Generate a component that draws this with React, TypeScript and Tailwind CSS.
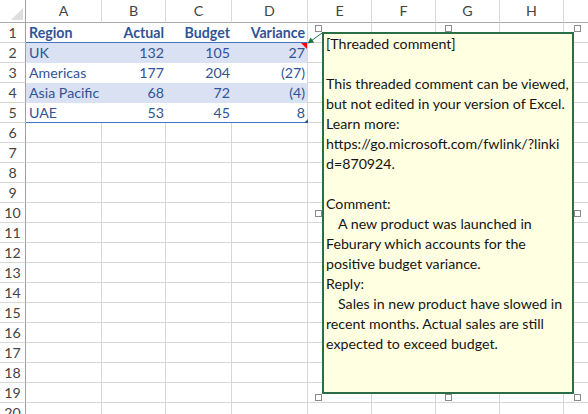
import React from 'react';

const COLS = ['A', 'B', 'C', 'D', 'E', 'F', 'G', 'H', ''];

const TABLE: string[][] = [
  ['Region', 'Actual', 'Budget', 'Variance'],
  ['UK', '132', '105', '27'],
  ['Americas', '177', '204', '(27)'],
  ['Asia Pacific', '68', '72', '(4)'],
  ['UAE', '53', '45', '8'],
];

const LINES: { t: string; indent?: boolean }[] = [
  { t: '[Threaded comment]' },
  { t: '' },
  { t: 'This threaded comment can be viewed,' },
  { t: 'but not edited in your version of Excel.' },
  { t: 'Learn more:' },
  { t: 'https://go.microsoft.com/fwlink/?linki' },
  { t: 'd=870924.' },
  { t: '' },
  { t: 'Comment:' },
  { t: 'A new product was launched in', indent: true },
  { t: 'Feburary which accounts for the' },
  { t: 'positive budget variance.' },
  { t: 'Reply:' },
  { t: 'Sales in new product have slowed in', indent: true },
  { t: 'recent months. Actual sales are still' },
  { t: 'expected to exceed budget.' },
];

function Cell({ r, c }: { r: number; c: number }) {
  if (r === 0 && c === 0) {
    return (
      <div className="flex items-end justify-end border-r border-b border-r-[#9f9f9f] border-b-[#ababab] bg-white pr-[2px] pb-[2px]">
        <svg width="12" height="12" viewBox="0 0 12 12">
          <polygon points="12,0 12,12 0,12" fill="#dedede" />
        </svg>
      </div>
    );
  }
  if (r === 0) {
    return (
      <div className="flex items-center justify-center border-r border-b border-r-[#dadada] border-b-[#ababab] bg-white pt-[1px] text-[#444444]">
        {COLS[c - 1]}
      </div>
    );
  }
  if (c === 0) {
    return (
      <div className="flex items-center justify-center border-r border-b border-r-[#9f9f9f] border-b-[#d6d6d6] bg-white pt-[1px] text-[#444444]">
        {r}
      </div>
    );
  }
  const inTable = r <= 5 && c <= 4;
  if (!inTable) {
    return <div className="border-r border-b border-[#d6d6d6] bg-white" />;
  }
  const value = TABLE[r - 1][c - 1];
  const band = r === 2 || r === 4;
  const rightBorder = c === 4;
  const blueBottom = r === 1 || r === 5;
  let cls = 'relative flex items-center whitespace-nowrap pt-[1px] text-[#305496] ';
  cls += band ? 'bg-[#d9e1f2] ' : 'bg-white ';
  cls += rightBorder ? 'border-r border-r-[#d6d6d6] ' : '';
  cls += blueBottom ? 'border-b border-b-[#4472c4] ' : '';
  cls += r === 1 ? 'font-bold ' : '';
  cls += c === 1 ? 'justify-start pl-[3px]' : 'justify-end pr-[2px]';
  return (
    <div className={cls}>
      {value}
      {r === 2 && c === 4 && (
        <svg className="absolute right-0 top-0" width="6" height="6" viewBox="0 0 6 6">
          <polygon points="0,0 6,0 6,6" fill="#ff0000" />
        </svg>
      )}
      {r === 5 && c === 4 && (
        <svg className="absolute right-[-1px] bottom-[-1px]" width="4" height="4" viewBox="0 0 4 4">
          <polygon points="4,0 4,4 0,4" fill="#2f5597" />
        </svg>
      )}
    </div>
  );
}

function Handle() {
  return <div className="h-[7px] w-[7px] border border-[#8a8a8a] bg-white" />;
}

export default function App() {
  const cells: React.ReactNode[] = [];
  for (let r = 0; r <= 20; r++) {
    for (let c = 0; c <= 9; c++) {
      cells.push(<Cell key={`${r}-${c}`} r={r} c={c} />);
    }
  }
  return (
    <div className="relative h-[414px] w-[588px] overflow-hidden bg-white font-['Lato',sans-serif] text-[14.2px] leading-none">
      <div className="grid grid-cols-[26px_76px_64px_66px_76px_64px_64px_64px_64px_64px] grid-rows-[23px_repeat(20,20px)]">
        {cells}
      </div>

      {/* connector arrow from comment to cell D2 */}
      <svg className="pointer-events-none absolute left-0 top-0" width="588" height="414" viewBox="0 0 588 414">
        <line x1="322" y1="33" x2="311" y2="41" stroke="#217346" strokeWidth="1" />
        <polygon points="307.5,43.5 314.1,42.4 310.6,37.6" fill="#217346" />
      </svg>

      {/* selected comment shape with its sizing handles */}
      <div className="absolute left-[315px] top-[25px] grid grid-cols-[7px_252px_7px] grid-rows-[7px_362px_7px]">
        <Handle />
        <div className="flex justify-center">
          <Handle />
        </div>
        <Handle />

        <div className="flex items-center">
          <Handle />
        </div>
        <div className="border-2 border-[#2a6e48] bg-[#ffffe1] pl-[2px] text-[#151515]">
          {LINES.map((l, i) => (
            <div key={i} className={'flex h-[20px] items-center whitespace-nowrap ' + (l.indent ? 'pl-[12px]' : '')}>
              {l.t}
            </div>
          ))}
        </div>
        <div className="flex items-center">
          <Handle />
        </div>

        <Handle />
        <div className="flex justify-center">
          <Handle />
        </div>
        <Handle />
      </div>
    </div>
  );
}
